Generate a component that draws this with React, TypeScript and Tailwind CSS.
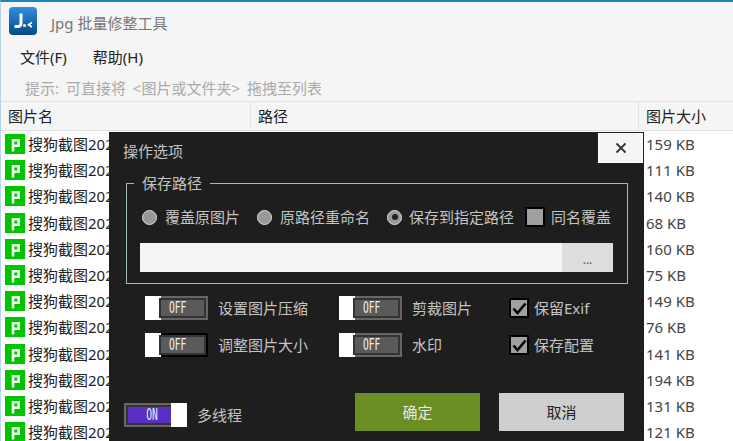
const FONT = { fontFamily: '"Noto Sans", "Noto Sans CJK SC", sans-serif' };

const sizes = ["159 KB","111 KB","140 KB","68 KB","160 KB","75 KB","149 KB","76 KB","141 KB","194 KB","131 KB","121 KB"];

function PIcon() {
  return (
    <svg width="20" height="20" viewBox="0 0 20 20" className="shrink-0">
      <rect width="20" height="20" fill="#00c400" />
      <path d="M8 17.5V6.2h5.6v5.6H8" fill="none" stroke="#f4fff4" strokeWidth="2.6" />
    </svg>
  );
}

function Logo() {
  return (
    <svg width="28" height="28" viewBox="0 0 28 28" className="shrink-0">
      <defs>
        <linearGradient id="lg" x1="0" y1="0" x2="0" y2="1">
          <stop offset="0" stopColor="#2f8fe0" />
          <stop offset="1" stopColor="#064a86" />
        </linearGradient>
      </defs>
      <rect width="28" height="28" rx="4" fill="url(#lg)" />
      <path d="M12 6.5V16.5a3 3 0 0 1-3 3H5.5" fill="none" stroke="#fff" strokeWidth="3" />
      <circle cx="15.5" cy="18.5" r="1.5" fill="#fff" />
      <path d="M23 15.5l-3.5 2.2 3.5 2.3" fill="none" stroke="#fff" strokeWidth="1.6" />
    </svg>
  );
}

function Toggle({ on = false, focus = false }: { on?: boolean; focus?: boolean }) {
  return (
    <div className={`flex h-6 w-[63px] shrink-0 border-2 ${focus ? "border-black" : "border-[#666666]"} ${on ? "flex-row-reverse" : ""}`}>
      <div className="-mx-0.5 -my-0.5 w-[16px] shrink-0 bg-white" />
      <div className={`flex flex-1 items-center justify-center border-2 border-[#333333] text-[15px] text-[#f0f0f0] ${on ? "bg-[#5a2fc4] pl-[6px]" : "bg-[#5a5a5a] pr-[10px]"}`} style={{ fontFamily: '"DejaVu Sans Mono", monospace' }}>
        <span className="inline-block scale-x-[0.64]">{on ? "ON" : "OFF"}</span>
      </div>
    </div>
  );
}

function Radio({ checked = false }: { checked?: boolean }) {
  return (
    <div className="flex size-[15px] shrink-0 items-center justify-center rounded-full border border-[#dddddd] bg-[#999999]">
      {checked && <div className="size-[6px] rounded-full bg-[#222222]" />}
    </div>
  );
}

function Check({ checked = false }: { checked?: boolean }) {
  return (
    <div className="flex size-[20px] shrink-0 items-center justify-center border-2 border-black bg-[#a0a0a0]">
      {checked && (
        <svg width="15" height="13" viewBox="0 0 15 13">
          <path d="M1.5 6.5l4 4.5 8-9.5" fill="none" stroke="#000" strokeWidth="2.6" />
        </svg>
      )}
    </div>
  );
}

export default function App() {
  return (
    <div className="relative flex h-[441px] w-[733px] flex-col overflow-hidden border-t-2 border-l border-t-[#1b87bd] border-l-[#b5d6ea] bg-[#f5f5f5] text-[15px] leading-5 whitespace-nowrap text-[#222222]" style={FONT}>
      <div className="flex h-[38px] shrink-0 items-center gap-[14px] pl-2 text-[#777777]">
        <Logo />
        <span className="mt-[4px]">Jpg 批量修整工具</span>
      </div>
      <div className="flex h-[31px] shrink-0 items-center gap-[26px] pt-0.5 pl-[19px]">
        <span>文件(F)</span>
        <span>帮助(H)</span>
      </div>
      <div className="flex h-[30px] shrink-0 items-center pt-1 pl-[24px] text-[#aaaaaa] [word-spacing:3px]">提示: 可直接将 &lt;图片或文件夹&gt; 拖拽至列表</div>
      <div className="flex h-[30px] shrink-0 border-y border-[#e2e2e2]">
        <div className="flex w-[250px] items-center border-r border-[#e2e2e2] pl-[7px]">图片名</div>
        <div className="flex w-[388px] items-center border-r border-[#e2e2e2] pl-[7px]">路径</div>
        <div className="flex flex-1 items-center pl-[7px]">图片大小</div>
      </div>
      <div className="flex-1 bg-white">
        {sizes.map((s) => (
          <div key={s} className="flex h-[26.2px] items-center">
            <div className="flex w-[638px] items-center gap-[3px] pl-1">
              <PIcon />
              <span>搜狗截图2021</span>
            </div>
            <span className="pl-[7px] text-[#444444]">{s}</span>
          </div>
        ))}
      </div>

      <div className="absolute top-[130px] left-[108px] flex h-[320px] w-[535px] flex-col bg-[#1e1e1e] text-[#c4c4c4]">
        <div className="flex h-[51px] shrink-0 items-start justify-between pt-px pr-px">
          <span className="pt-[8px] pl-[14px]">操作选项</span>
          <div className="flex h-[30px] w-[45px] items-center justify-center border border-white bg-[#f5f5f5]">
            <svg width="12" height="12" viewBox="0 0 12 12">
              <path d="M1.5 1.5l9 9M10.5 1.5l-9 9" stroke="#333" strokeWidth="1.8" />
            </svg>
          </div>
        </div>
        <div className="relative mx-[17px] flex h-[101px] w-[502px] shrink-0 flex-col border border-[#a3b8b8] pt-[23px] pr-[14px] pl-[13px]">
          <span className="absolute -top-[11px] left-[7px] bg-[#1e1e1e] px-[8px]">保存路径</span>
          <div className="flex h-[20px] items-center pl-[2px]">
            <Radio />
            <span className="ml-[8px] w-[92px]">覆盖原图片</span>
            <Radio />
            <span className="ml-[8px] w-[107px]">原路径重命名</span>
            <Radio checked />
            <span className="ml-[7px] w-[116px]">保存到指定路径</span>
            <Check />
            <span className="ml-[6px]">同名覆盖</span>
          </div>
          <div className="mt-[16px] flex h-[29px] bg-[#f5f5f5]">
            <div className="flex-1" />
            <div className="flex w-[51px] items-end justify-center bg-[#dddddd] pb-[2px] text-[12px] text-[#555555]">...</div>
          </div>
        </div>
        <div className="mt-[12px] flex h-[24px] shrink-0 items-center pl-[36px]">
          <Toggle />
          <span className="ml-[10px] w-[121px]">设置图片压缩</span>
          <Toggle />
          <span className="ml-[10px] w-[97px]">剪裁图片</span>
          <Check checked />
          <span className="ml-[5px]">保留Exif</span>
        </div>
        <div className="mt-[13px] flex h-[24px] shrink-0 items-center pl-[36px]">
          <Toggle focus />
          <span className="ml-[10px] w-[121px]">调整图片大小</span>
          <Toggle />
          <span className="ml-[10px] w-[97px]">水印</span>
          <Check checked />
          <span className="ml-[5px]">保存配置</span>
        </div>
        <div className="mt-[36px] flex shrink-0 items-end pl-[15px]">
          <div className="mb-[4px] flex w-[231px] items-center">
            <Toggle on />
            <span className="ml-[10px]">多线程</span>
          </div>
          <div className="flex h-[38px] w-[125px] items-center justify-center bg-[#6b8e23] text-[#e6e6e6]">确定</div>
          <div className="ml-[19px] flex h-[38px] w-[125px] items-center justify-center bg-[#cfcfcf] text-[#222222]">取消</div>
        </div>
      </div>
    </div>
  );
}
